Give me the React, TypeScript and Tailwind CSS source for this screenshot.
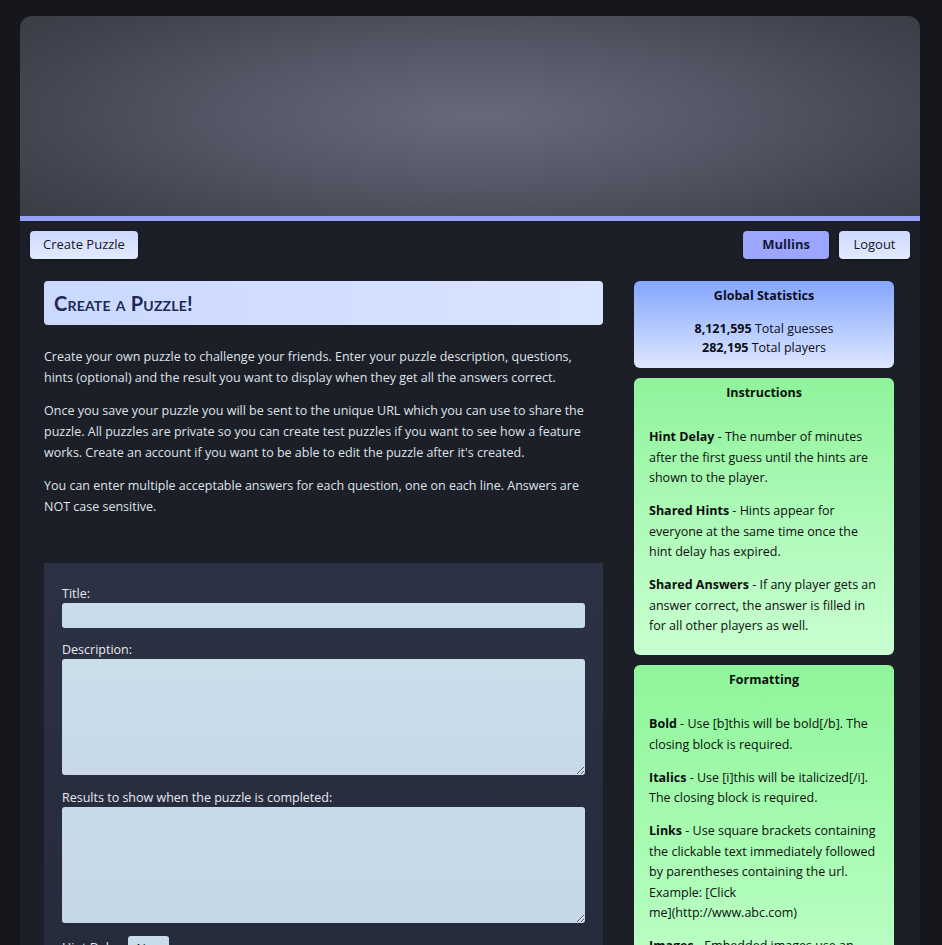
import { useState } from 'react'

const font = "font-['Open_Sans',_'Noto_Sans',_sans-serif]"

function NavButton({ children, active, wide }: { children: React.ReactNode; active?: boolean; wide?: boolean }) {
  if (active) {
    return (
      <button
        type="button"
        className="h-[28px] px-[19px] rounded-[4px] bg-[#9ca5ff] text-[13px] font-bold text-[#141a33] shadow-[0_1px_3px_rgba(0,0,0,0.4)]"
      >
        {children}
      </button>
    )
  }
  return (
    <button
      type="button"
      className={
        'h-[28px] rounded-[4px] bg-gradient-to-b from-[#ccd9ff] to-[#e3eaff] text-[13px] text-[#141722] shadow-[0_1px_3px_rgba(0,0,0,0.4)] ' +
        (wide ? 'px-[14.5px]' : 'px-[13px]')
      }
    >
      {children}
    </button>
  )
}

function Term({ name, children }: { name: string; children: React.ReactNode }) {
  return (
    <p className="mb-[12.5px] leading-[20.5px]">
      <b>{name}</b> - {children}
    </p>
  )
}

function Field({ label, children }: { label: string; children: React.ReactNode }) {
  return (
    <label className="block">
      <span className="block leading-[18px] text-[#e6eaf1]">{label}</span>
      {children}
    </label>
  )
}

export default function App() {
  const [title, setTitle] = useState('')
  const [description, setDescription] = useState('')
  const [results, setResults] = useState('')

  return (
    <div className={`min-h-screen bg-[#15171d] px-5 pt-4 text-[12.5px] ${font}`}>
      <div className="w-[900px] overflow-hidden rounded-t-[12px] bg-[#1c1f27] pb-10">
        {/* banner */}
        <div className="h-[205px] border-b-[5px] border-[#979ef6] bg-[radial-gradient(ellipse_62%_78%_at_51%_50%,#686979_0%,#555766_45%,#41434e_85%,#3b3d47_100%)]" />

        {/* nav */}
        <div className="flex items-center gap-[10px] px-[10px] pt-[10px]">
          <NavButton>Create Puzzle</NavButton>
          <div className="flex-1" />
          <NavButton active>Mullins</NavButton>
          <NavButton wide>Logout</NavButton>
        </div>

        <div className="flex items-start gap-[31px] pl-6 pr-[26px] pt-[22px]">
          {/* left column */}
          <div className="w-[559px] shrink-0">
            <h1 className="flex h-[44px] items-center rounded-[4px] bg-gradient-to-r from-[#cbd9ff] to-[#d9e4ff] px-[10px] font-['Lato',_sans-serif] text-[20px] font-bold tracking-[0.2px] text-[#1e2955] [font-variant:small-caps]">
              Create a Puzzle!
            </h1>

            <div className="mt-[21px] space-y-3 leading-[21px] text-[#dfe3ea]">
              <p>
                Create your own puzzle to challenge your friends. Enter your puzzle description, questions,
                hints (optional) and the result you want to display when they get all the answers correct.
              </p>
              <p>
                Once you save your puzzle you will be sent to the unique URL which you can use to share the
                puzzle. All puzzles are private so you can create test puzzles if you want to see how a feature
                works. Create an account if you want to be able to edit the puzzle after it's created.
              </p>
              <p>
                You can enter multiple acceptable answers for each question, one on each line. Answers are NOT
                case sensitive.
              </p>
            </div>

            <form className="mt-[46px] bg-gradient-to-b from-[#2c3143] to-[#242a3a] px-[18px] pb-6 pt-[22px]">
              <Field label="Title:">
                <input
                  value={title}
                  onChange={e => setTitle(e.target.value)}
                  className="block h-[25px] w-full rounded-[3px] bg-[#c9dcea] px-2 text-[#111] outline-none"
                />
              </Field>
              <div className="mt-[13px]">
                <Field label="Description:">
                  <textarea
                    value={description}
                    onChange={e => setDescription(e.target.value)}
                    className="block h-[116px] w-full rounded-[3px] bg-gradient-to-b from-[#c9dfea] to-[#c7d9e8] px-2 py-1 text-[#111] outline-none"
                  />
                </Field>
              </div>
              <div className="mt-[14px]">
                <Field label="Results to show when the puzzle is completed:">
                  <textarea
                    value={results}
                    onChange={e => setResults(e.target.value)}
                    className="block h-[116px] w-full rounded-[3px] bg-gradient-to-b from-[#c8dbea] to-[#c6d8e8] px-2 py-1 text-[#111] outline-none"
                  />
                </Field>
              </div>
              <div className="mt-[13px] flex items-center gap-[3px]">
                <span className="text-[#e6eaf1]">Hint Delay:</span>
                <select className="h-[24px] w-[41px] rounded-[3px] bg-[#c9dcea] px-1 text-[#111] outline-none">
                  <option>None</option>
                  <option>5</option>
                  <option>10</option>
                </select>
              </div>
              <div className="mt-3 flex items-center gap-2 text-[#e6eaf1]">
                <input type="checkbox" /> Shared Hints
              </div>
              <div className="mt-3 flex items-center gap-2 text-[#e6eaf1]">
                <input type="checkbox" /> Shared Answers
              </div>
            </form>
          </div>

          {/* right column */}
          <div className="flex w-[260px] shrink-0 flex-col gap-[10px] text-[#0c0f0d]">
            <div className="rounded-[6px] bg-gradient-to-b from-[#84a6ff] to-[#dfe7ff] px-[15px] pb-[11px] pt-[5px] text-center leading-[19px] text-[#0b0d18]">
              <div className="font-bold">Global Statistics</div>
              <div className="mt-[14px]">
                <b>8,121,595</b> Total guesses
              </div>
              <div>
                <b>282,195</b> Total players
              </div>
            </div>

            <div className="rounded-[6px] bg-gradient-to-b from-[#8ff49b] to-[#c9ffd2] px-[15px] pb-[6px] pt-[5px]">
              <div className="text-center font-bold leading-[20px]">Instructions</div>
              <div className="mt-[24px]">
                <Term name="Hint Delay">
                  The number of minutes after the first guess until the hints are shown to the player.
                </Term>
                <Term name="Shared Hints">
                  Hints appear for everyone at the same time once the hint delay has expired.
                </Term>
                <Term name="Shared Answers">
                  If any player gets an answer correct, the answer is filled in for all other players as well.
                </Term>
              </div>
            </div>

            <div className="rounded-[6px] bg-gradient-to-b from-[#8ff59a] via-[#a9fcb3] to-[#c9ffd2] px-[15px] pb-[6px] pt-[5px]">
              <div className="text-center font-bold leading-[20px]">Formatting</div>
              <div className="mt-[24px]">
                <Term name="Bold">Use [b]this will be bold[/b]. The closing block is required.</Term>
                <Term name="Italics">Use [i]this will be italicized[/i]. The closing block is required.</Term>
                <Term name="Links">
                  Use square brackets containing the clickable text immediately followed by parentheses
                  containing the url. Example: [Click <span className="whitespace-nowrap">me](http://www.abc.com)</span>
                </Term>
                <Term name="Images">
                  Embedded images use an exclamation mark before the link. Example: ![alt](http://www.abc.com/a.png)
                </Term>
              </div>
            </div>
          </div>
        </div>
      </div>
    </div>
  )
}
